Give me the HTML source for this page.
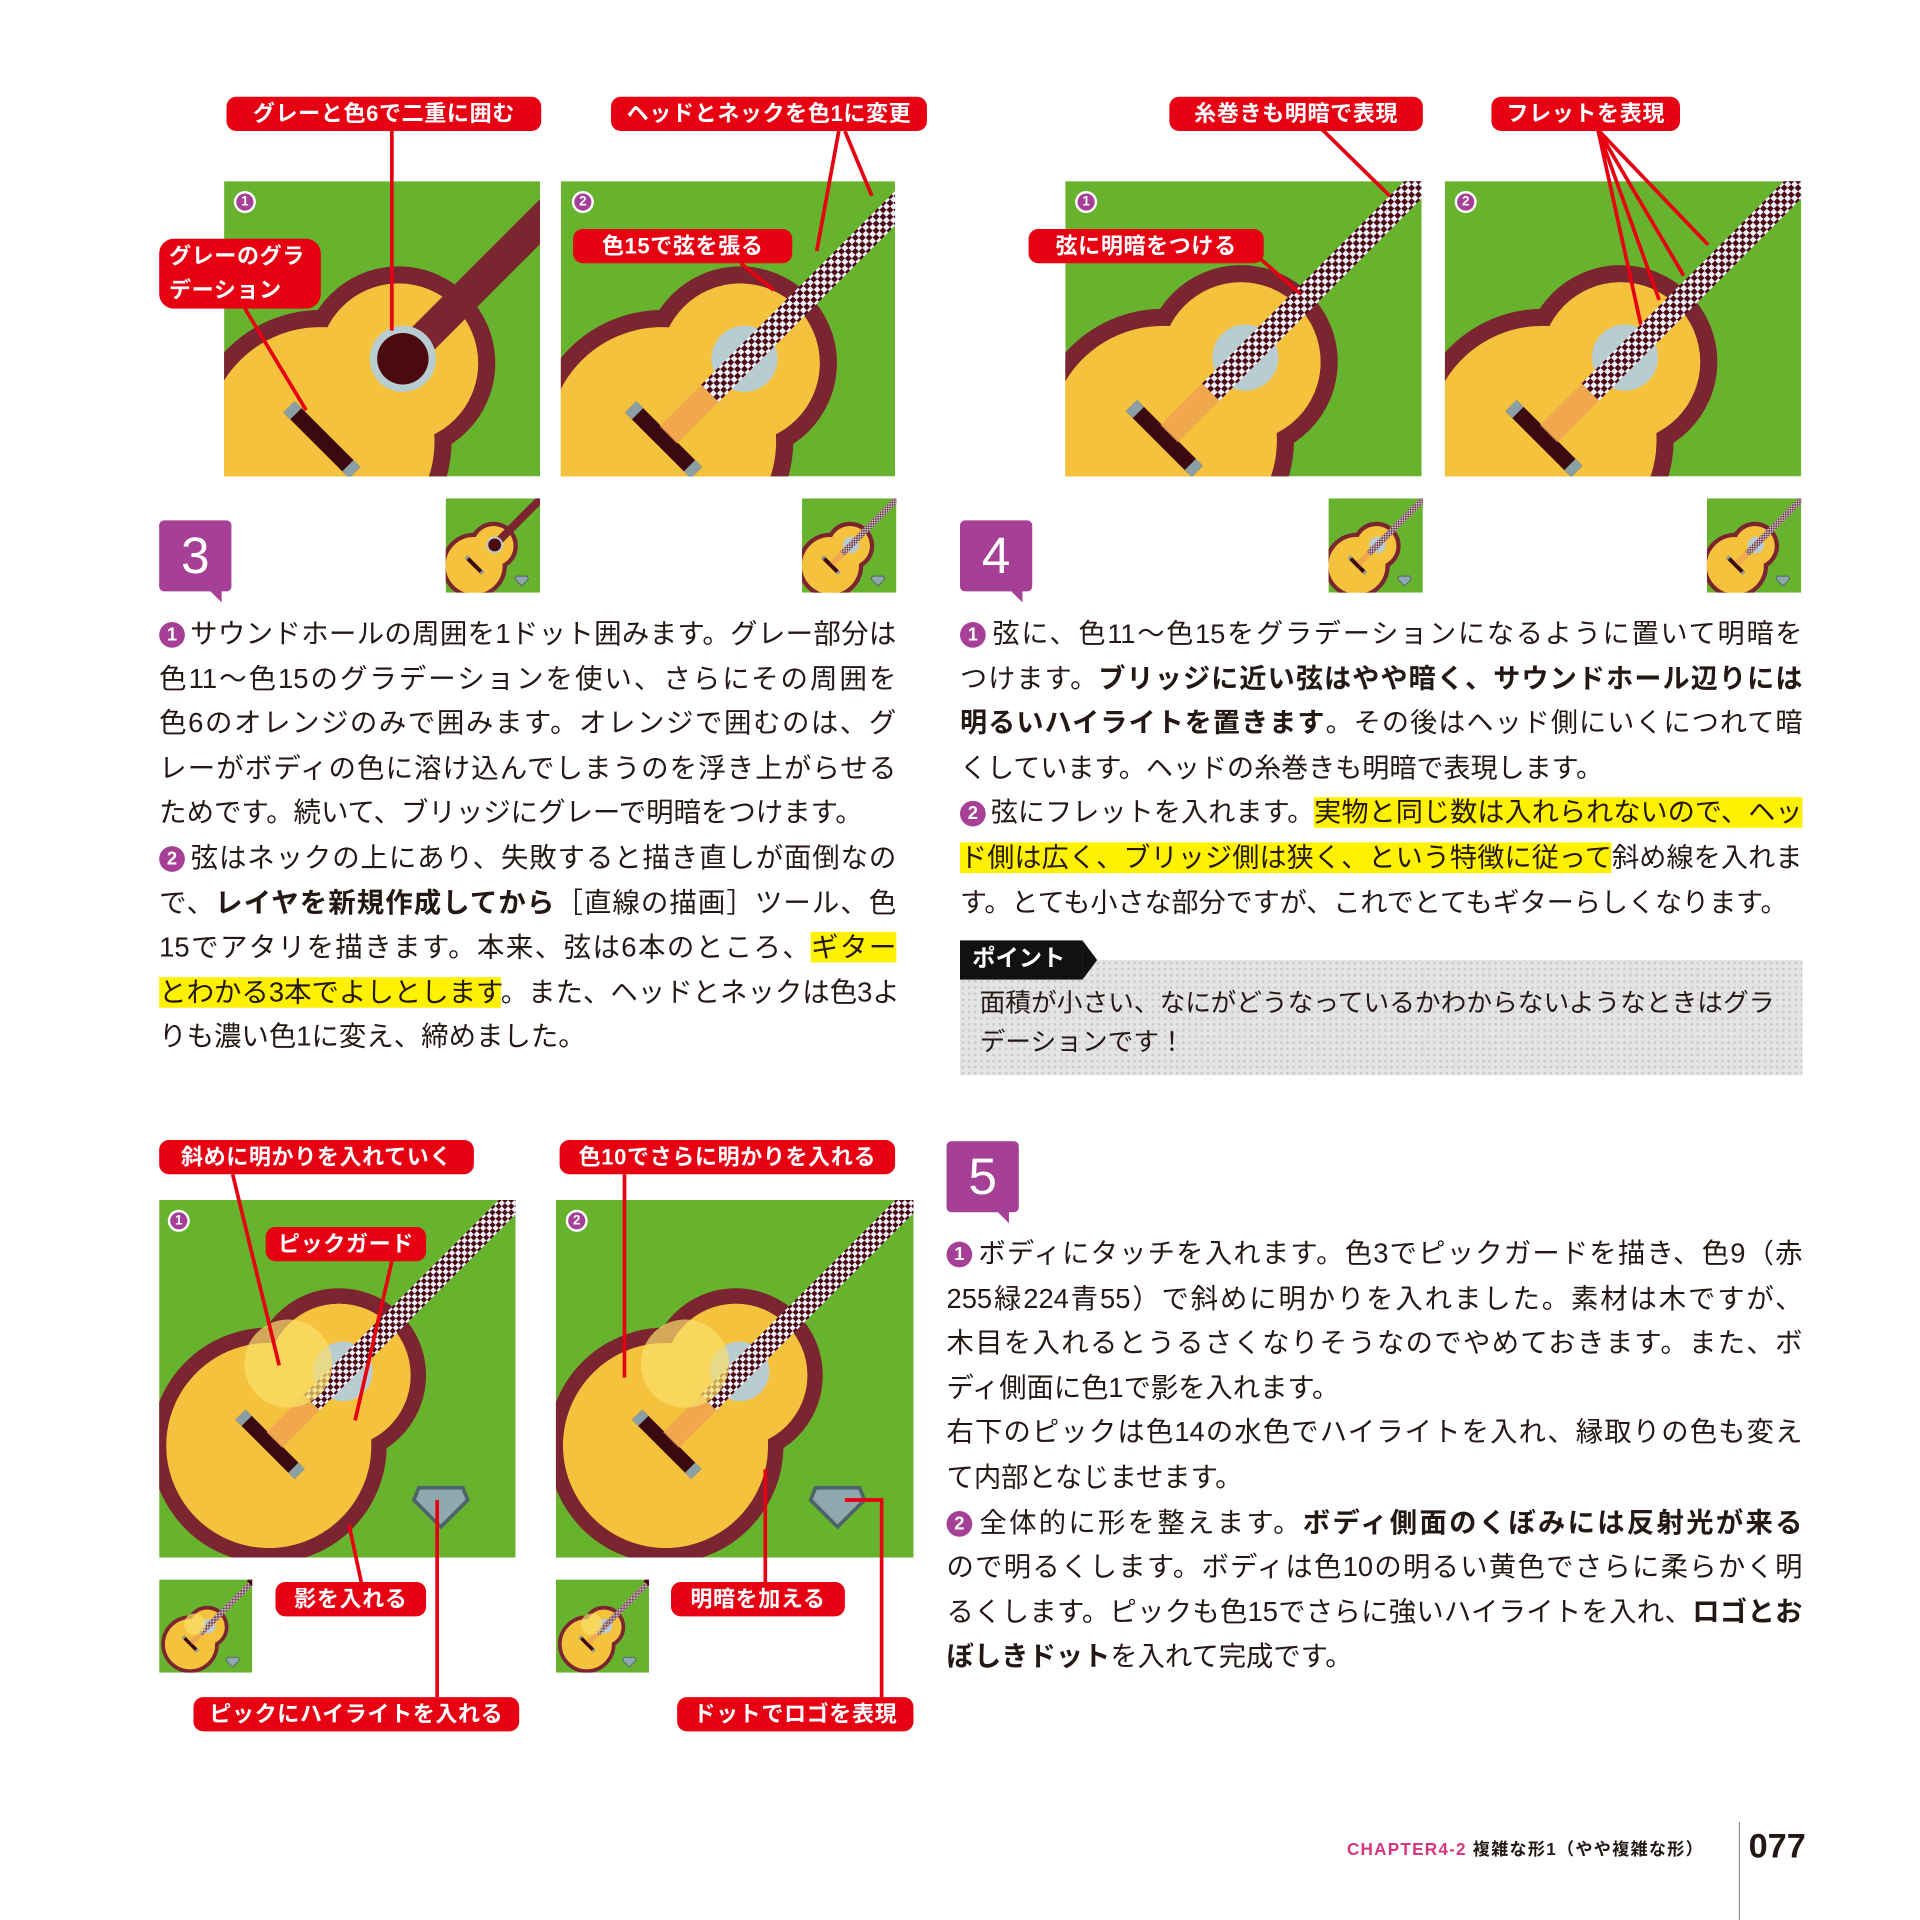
<!DOCTYPE html>
<html><head><meta charset="utf-8">
<style>
html,body{margin:0;padding:0;background:#fff;}
body{width:1920px;height:1920px;overflow:hidden;position:relative;}
#w{position:absolute;left:0;top:0;width:1568px;height:1568px;transform:scale(1.22449);transform-origin:0 0;font-family:"Liberation Sans","Noto Sans CJK JP",sans-serif;color:#231815;}
.a{position:absolute;}
.pill{position:absolute;background:#e60012;color:#fff;font-weight:bold;font-size:18px;border-radius:8px;height:28px;line-height:28px;text-align:center;white-space:nowrap;letter-spacing:0.5px;}
.txt{position:absolute;font-size:22.6px;line-height:36.6px;}
.txt div{text-align:justify;text-align-last:justify;white-space:nowrap;height:36.6px;}
.txt div.s{text-align-last:left;}
mark{background:#fff100;color:#231815;}
b{font-weight:bold;}
.n{display:inline-block;width:21px;height:21px;border-radius:50%;background:#a63f96;color:#fff;font-size:15px;line-height:21px;text-align:center;text-align-last:center;vertical-align:2px;margin-right:4px;font-weight:bold;}
.badge{position:absolute;width:59px;height:58px;background:#a63f96;border-radius:4px;color:#fff;font-size:42px;line-height:58px;text-align:center;}
.badge:after{content:"";position:absolute;right:8px;bottom:-9px;border-left:10px solid transparent;border-top:10px solid #a63f96;}
.pn{position:absolute;width:18px;height:18px;border-radius:50%;background:#fff;}
.pn span{position:absolute;left:2px;top:2px;width:14px;height:14px;border-radius:50%;background:#a63f96;color:#fff;font-size:11px;line-height:14px;text-align:center;font-weight:bold;}
</style></head><body><div id="w">

<svg width="0" height="0" style="position:absolute">
<defs>
<pattern id="ck" width="8" height="8" patternUnits="userSpaceOnUse"><rect width="8" height="8" fill="#4a0a10"/><rect width="4" height="4" fill="#eef"/><rect x="4" y="4" width="4" height="4" fill="#eef"/></pattern>
<g id="body">
<circle cx="-95" cy="0" r="100" fill="#f5c23e" stroke="#7b2530" stroke-width="14"/>
<circle cx="-5" cy="0" r="72" fill="#f5c23e" stroke="#7b2530" stroke-width="14"/>
<circle cx="-95" cy="0" r="93" fill="#f5c23e"/>
<circle cx="-5" cy="0" r="65" fill="#f5c23e"/>
<rect x="-100" y="-38" width="13" height="76" fill="#3a0a10"/>
<rect x="-100" y="-38" width="13" height="8" fill="#8aa0a6"/>
<rect x="-100" y="30" width="13" height="8" fill="#8aa0a6"/>
</g>
<g id="g1"><use href="#body"/>
<rect x="20" y="-13" width="230" height="26" fill="#7b2530"/>
<rect x="250" y="-17" width="50" height="34" fill="#7b2530"/>
<circle r="27" fill="#b8cdd2"/><circle r="21" fill="#4a0a10"/>
</g>
<g id="g2"><use href="#body"/>
<circle r="27" fill="#b8cdd2"/>
<rect x="-88" y="-10" width="108" height="20" fill="#f0a050" opacity=".8"/>
<rect x="-40" y="-10" width="260" height="20" fill="url(#ck)"/>
<rect x="220" y="-17" width="50" height="34" fill="#4a0a10"/>
</g>
<g id="g3"><use href="#g2"/>
<circle cx="-30" cy="-40" r="40" fill="#fae06a" opacity=".7"/>
</g>
<polygon id="pk" points="-18,-10 18,-10 22,0 0,22 -22,0" fill="#8fa8ad" stroke="#4e6468" stroke-width="3"/>
</defs></svg>

<svg class="a" style="left:183px;top:148px" width="258" height="241"><rect width="258" height="241" fill="#68b32e"/><use href="#g1" transform="translate(146,145) rotate(-45)"/></svg>
<svg class="a" style="left:458px;top:148px" width="273" height="241"><rect width="273" height="241" fill="#68b32e"/><use href="#g2" transform="translate(150,145) rotate(-45)"/></svg>
<svg class="a" style="left:870px;top:148px" width="291" height="241"><rect width="291" height="241" fill="#68b32e"/><use href="#g2" transform="translate(147,144) rotate(-45)"/></svg>
<svg class="a" style="left:1180px;top:148px" width="291" height="241"><rect width="291" height="241" fill="#68b32e"/><use href="#g2" transform="translate(147,144) rotate(-45)"/></svg>
<svg class="a" style="left:364px;top:407px" width="77" height="77"><rect width="77" height="77" fill="#68b32e"/><use href="#g1" transform="translate(40,38) scale(.25) rotate(-45)"/><use href="#pk" transform="translate(62,66) scale(.25)"/></svg>
<svg class="a" style="left:655px;top:407px" width="77" height="77"><rect width="77" height="77" fill="#68b32e"/><use href="#g2" transform="translate(40,38) scale(.25) rotate(-45)"/><use href="#pk" transform="translate(62,66) scale(.25)"/></svg>
<svg class="a" style="left:1085px;top:407px" width="77" height="77"><rect width="77" height="77" fill="#68b32e"/><use href="#g2" transform="translate(40,38) scale(.25) rotate(-45)"/><use href="#pk" transform="translate(62,66) scale(.25)"/></svg>
<svg class="a" style="left:1394px;top:407px" width="77" height="77"><rect width="77" height="77" fill="#68b32e"/><use href="#g2" transform="translate(40,38) scale(.25) rotate(-45)"/><use href="#pk" transform="translate(62,66) scale(.25)"/></svg>
<svg class="a" style="left:130px;top:980px" width="291" height="292"><rect width="291" height="292" fill="#68b32e"/><use href="#g3" transform="translate(150,140) scale(.9) rotate(-45)"/><use href="#pk" transform="translate(230,245)"/></svg>
<svg class="a" style="left:454px;top:980px" width="292" height="292"><rect width="292" height="292" fill="#68b32e"/><use href="#g3" transform="translate(150,140) scale(.9) rotate(-45)"/><use href="#pk" transform="translate(230,245)"/></svg>
<svg class="a" style="left:130px;top:1290px" width="76" height="76"><rect width="76" height="76" fill="#68b32e"/><use href="#g3" transform="translate(40,38) scale(.22) rotate(-45)"/><use href="#pk" transform="translate(60,66) scale(.25)"/></svg>
<svg class="a" style="left:454px;top:1290px" width="76" height="76"><rect width="76" height="76" fill="#68b32e"/><use href="#g3" transform="translate(40,38) scale(.22) rotate(-45)"/><use href="#pk" transform="translate(60,66) scale(.25)"/></svg>

<div class="pn" style="left:191px;top:156px"><span>1</span></div>
<div class="pn" style="left:467px;top:156px"><span>2</span></div>
<div class="pn" style="left:878px;top:156px"><span>1</span></div>
<div class="pn" style="left:1188px;top:156px"><span>2</span></div>
<div class="pn" style="left:137px;top:988px"><span>1</span></div>
<div class="pn" style="left:462px;top:988px"><span>2</span></div>

<svg class="a" style="left:0;top:0" width="1568" height="1568" fill="none" stroke="#e60012" stroke-width="3">
<path d="M320 106V270M200 252L250 335M685 107L667 205M690 107L712 160M605 215L632 237"/>
<path d="M1080 106L1135 160M1030 212L1062 240M1305 106L1340 265M1305 106L1355 245M1305 106L1375 225M1305 106L1395 200"/>
<path d="M190 959L228 1115M320 1030L290 1160M295 1292L285 1245M357 1386V1225M510 959V1125M625 1292V1200M720 1386V1225H690"/>
</svg>

<div class="pill" style="left:185px;top:79px;width:257px">グレーと色6で二重に囲む</div>
<div class="pill" style="left:499px;top:79px;width:258px">ヘッドとネックを色1に変更</div>
<div class="pill" style="left:130px;top:195px;width:132px;height:57px;line-height:28px;text-align:left;padding-left:8px;box-sizing:border-box;border-radius:12px">グレーのグラ<br>デーション</div>
<div class="pill" style="left:468px;top:187px;width:179px">色15で弦を張る</div>
<div class="pill" style="left:955px;top:79px;width:207px">糸巻きも明暗で表現</div>
<div class="pill" style="left:1218px;top:79px;width:154px">フレットを表現</div>
<div class="pill" style="left:840px;top:187px;width:192px">弦に明暗をつける</div>
<div class="pill" style="left:130px;top:931px;width:257px">斜めに明かりを入れていく</div>
<div class="pill" style="left:217px;top:1002px;width:131px">ピックガード</div>
<div class="pill" style="left:225px;top:1292px;width:123px">影を入れる</div>
<div class="pill" style="left:158px;top:1386px;width:266px">ピックにハイライトを入れる</div>
<div class="pill" style="left:457px;top:931px;width:274px">色10でさらに明かりを入れる</div>
<div class="pill" style="left:548px;top:1292px;width:142px">明暗を加える</div>
<div class="pill" style="left:553px;top:1386px;width:193px">ドットでロゴを表現</div>

<div class="badge" style="left:130px;top:425px">3</div>
<div class="badge" style="left:784px;top:425px">4</div>
<div class="badge" style="left:773px;top:932px">5</div>

<div class="txt" style="left:130px;top:500px;width:602px;font-size:22.4px">
<div><span class="n">1</span>サウンドホールの周囲を1ドット囲みます。グレー部分は</div>
<div>色11〜色15のグラデーションを使い、さらにその周囲を</div>
<div>色6のオレンジのみで囲みます。オレンジで囲むのは、グ</div>
<div>レーがボディの色に溶け込んでしまうのを浮き上がらせる</div>
<div class="s">ためです。続いて、ブリッジにグレーで明暗をつけます。</div>
<div><span class="n">2</span>弦はネックの上にあり、失敗すると描き直しが面倒なの</div>
<div>で、<b>レイヤを新規作成してから</b>［直線の描画］ツール、色</div>
<div>15でアタリを描きます。本来、弦は6本のところ、<mark>ギター</mark></div>
<div><mark>とわかる3本でよしとします</mark>。また、ヘッドとネックは色3よ</div>
<div class="s">りも濃い色1に変え、締めました。</div>
</div>

<div class="txt" style="left:784px;top:500px;width:688px;font-size:22.1px">
<div><span class="n">1</span>弦に、色11〜色15をグラデーションになるように置いて明暗を</div>
<div>つけます。<b>ブリッジに近い弦はやや暗く、サウンドホール辺りには</b></div>
<div><b>明るいハイライトを置きます</b>。その後はヘッド側にいくにつれて暗</div>
<div class="s">くしています。ヘッドの糸巻きも明暗で表現します。</div>
<div><span class="n">2</span>弦にフレットを入れます。<mark>実物と同じ数は入れられないので、ヘッ</mark></div>
<div><mark>ド側は広く、ブリッジ側は狭く、という特徴に従って</mark>斜め線を入れま</div>
<div class="s">す。とても小さな部分ですが、これでとてもギターらしくなります。</div>
</div>

<div class="a" style="left:784px;top:784px;width:688px;height:94px;background:#e4e4e4;background-image:radial-gradient(#c8c8c8 1px,transparent 1.2px);background-size:5px 5px;"></div>
<div class="a" style="left:784px;top:768px;width:100px;height:32px;background:#111;color:#fff;font-weight:bold;font-size:19px;line-height:32px;padding-left:10px;box-sizing:border-box;">ポイント</div>
<div class="a" style="left:884px;top:768px;width:0;height:0;border-top:16px solid transparent;border-bottom:16px solid transparent;border-left:12px solid #111;"></div>
<div class="a" style="left:800px;top:804px;font-size:21px;line-height:32px;white-space:nowrap;">面積が小さい、なにがどうなっているかわからないようなときはグラ<br>デーションです！</div>

<div class="txt" style="left:773px;top:1006px;width:699px;line-height:36.7px;font-size:22.3px">
<div><span class="n">1</span>ボディにタッチを入れます。色3でピックガードを描き、色9（赤</div>
<div>255緑224青55）で斜めに明かりを入れました。素材は木ですが、</div>
<div>木目を入れるとうるさくなりそうなのでやめておきます。また、ボ</div>
<div class="s">ディ側面に色1で影を入れます。</div>
<div>右下のピックは色14の水色でハイライトを入れ、縁取りの色も変え</div>
<div class="s">て内部となじませます。</div>
<div><span class="n">2</span>全体的に形を整えます。<b>ボディ側面のくぼみには反射光が来る</b></div>
<div>ので明るくします。ボディは色10の明るい黄色でさらに柔らかく明</div>
<div>るくします。ピックも色15でさらに強いハイライトを入れ、<b>ロゴとお</b></div>
<div class="s"><b>ぼしきドット</b>を入れて完成です。</div>
</div>

<div class="a" style="left:1100px;top:1500px;font-size:14px;font-weight:bold;white-space:nowrap;letter-spacing:1px"><span style="color:#d6377e">CHAPTER4-2</span> 複雑な形1（やや複雑な形）</div>
<div class="a" style="left:1420px;top:1488px;width:1px;height:80px;background:#999"></div>
<div class="a" style="left:1428px;top:1492px;font-size:28px;font-weight:bold;">077</div>

</div></body></html>
